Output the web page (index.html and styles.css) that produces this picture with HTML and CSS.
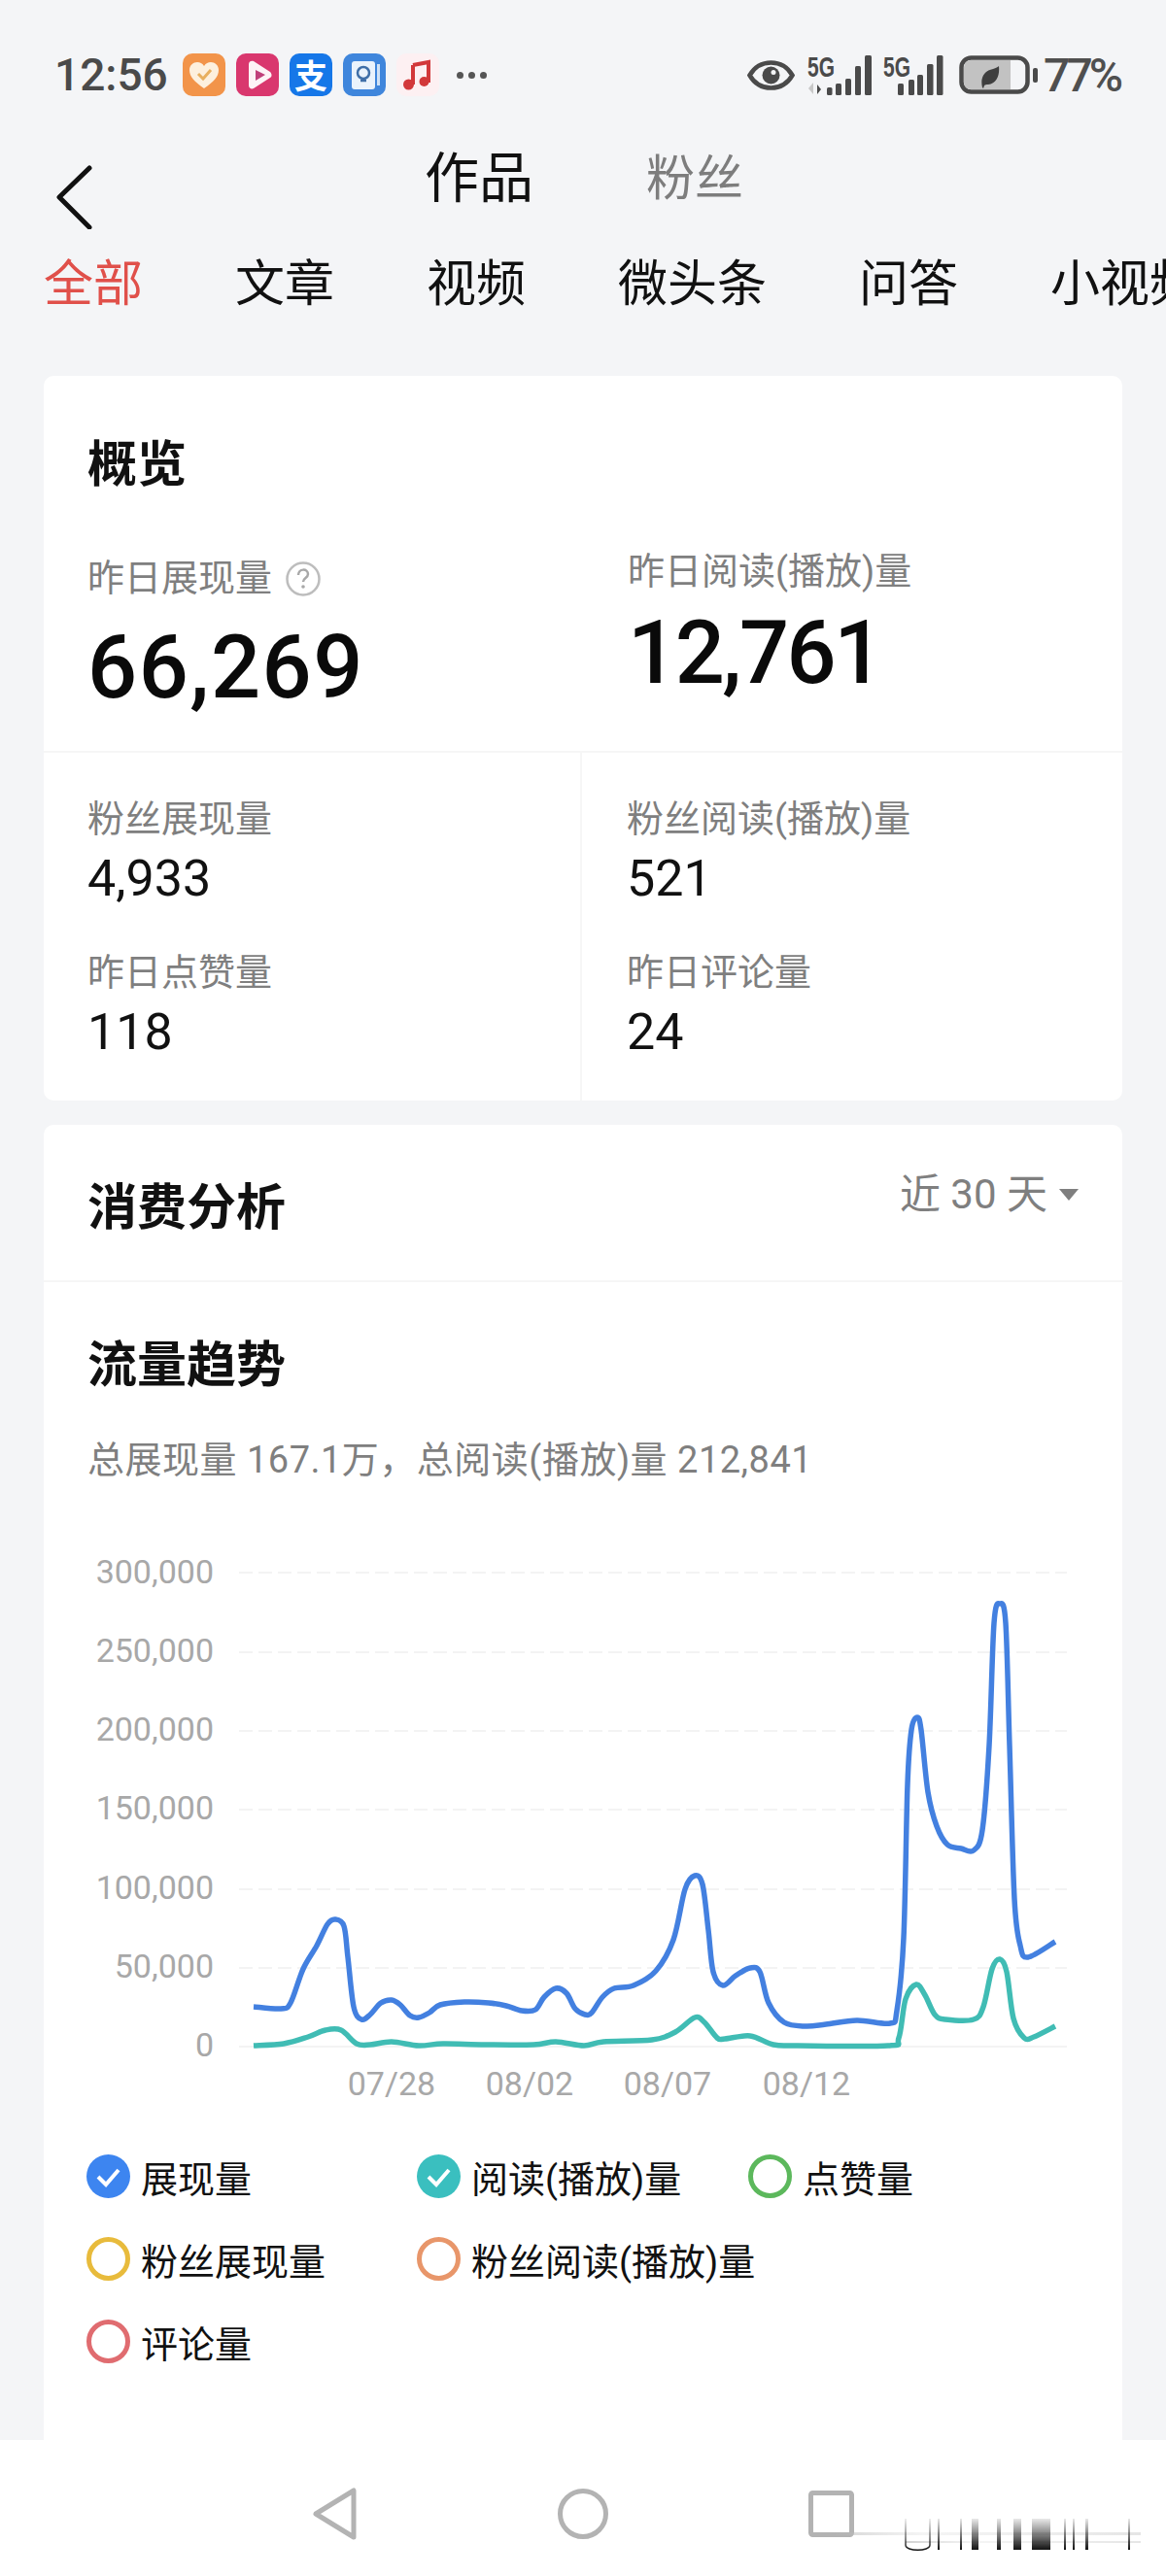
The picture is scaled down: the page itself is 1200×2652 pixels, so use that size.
FILE: index.html
```html
<!DOCTYPE html>
<html lang="zh-CN">
<head>
    <meta charset="UTF-8">
    <meta name="viewport" content="width=device-width, initial-scale=1.0">
    <title>作品</title>
    <link rel="stylesheet" href="styles.css">
</head>
<body>
    <div class="status">
        <span class="time">12:56</span>
        <div class="apps">
            <svg class="app" viewBox="0 0 44 44"><rect width="44" height="44" rx="10" fill="#f2944a"/><path d="M22 36C12 29 7 24 7 17c0-5 4-8 8-8 3 0 5 1 7 4 2-3 4-4 7-4 4 0 8 3 8 8 0 7-5 12-15 19z" fill="#fdf0de"/><path d="M16 21l5 5 8-9" fill="none" stroke="#e8b060" stroke-width="3"/></svg>
            <svg class="app" viewBox="0 0 44 44"><rect width="44" height="44" rx="10" fill="#d9376e"/><path d="M13 11c0-3 3-4 5-3l17 11c2 2 2 5 0 6L18 36c-2 1-5 0-5-3z" fill="#fdf3f6"/><path d="M20 17l10 5-10 6z" fill="#c0407a"/></svg>
            <svg class="app" viewBox="0 0 44 44"><rect width="44" height="44" rx="10" fill="#1677e8"/><text x="22" y="36" class="app-text">支</text></svg>
            <svg class="app" viewBox="0 0 44 44"><rect width="44" height="44" rx="10" fill="#3f86dc"/><rect x="9" y="8" width="24" height="29" rx="3" fill="#eaf3fc"/><rect x="35" y="11" width="3" height="22" fill="#cfe2f6"/><circle cx="21" cy="20" r="6" fill="none" stroke="#3f6fa8" stroke-width="2.500"/><path d="M18 28h6" stroke="#3f6fa8" stroke-width="2.500"/></svg>
            <svg class="app" viewBox="0 0 44 44"><rect width="44" height="44" rx="10" fill="#fdf0f2"/><path d="M17 12l16-3v21" fill="none" stroke="#d2383a" stroke-width="4"/><path d="M17 12v20" stroke="#d2383a" stroke-width="4"/><circle cx="12.500" cy="32" r="5.500" fill="#d2383a"/><circle cx="28.500" cy="29" r="5" fill="#d2383a"/></svg>
            <span class="dots"><i></i><i></i><i></i></span>
        </div>
        <div class="status-right">
            <svg class="eye" viewBox="0 0 49 31"><path d="M2.500 15.500C8 6 16 2.500 24.500 2.500S41 6 46.500 15.500C41 25 33 28.500 24.500 28.500S8 25 2.500 15.500z" fill="none" stroke="#4a4a4a" stroke-width="4.500"/><circle cx="24.500" cy="15.500" r="9" fill="#4a4a4a"/><circle cx="27" cy="12.500" r="2.500" fill="#f4f5f7"/></svg>
            <svg class="signal" viewBox="0 0 66 41"><text x="0" y="22" class="sig-text" textLength="28" lengthAdjust="spacingAndGlyphs">5G</text><path d="M6 28l-5 6 5 6z" fill="#c8c8c8"/><path d="M10 30l4 5-4 5z" fill="#4a4a4a"/><rect x="20" y="33" width="5.500" height="8" rx="1.500"/><rect x="29" y="29" width="6" height="12" rx="1.500"/><rect x="39" y="24" width="6" height="17" rx="1.500"/><rect x="49" y="11" width="6" height="30" rx="1.500"/><rect x="59" y="0" width="7" height="41" rx="1.500"/></svg>
            <svg class="signal signal-b" viewBox="0 0 62 41"><text x="0" y="22" class="sig-text" textLength="28" lengthAdjust="spacingAndGlyphs">5G</text><rect x="15" y="29" width="6" height="12" rx="1.500"/><rect x="26" y="25" width="6" height="16" rx="1.500"/><rect x="35" y="20" width="6" height="21" rx="1.500"/><rect x="45" y="9" width="6.500" height="32" rx="1.500"/><rect x="55" y="0" width="6.500" height="41" rx="1.500"/></svg>
            <svg class="battery" viewBox="0 0 81 40"><rect x="2.500" y="2.500" width="68" height="35" rx="10" fill="none" stroke="#4a4a4a" stroke-width="4.500"/><path d="M5 12a7 7 0 0 1 7-7h41v30H12a7 7 0 0 1-7-7z" fill="#c2c2c2"/><path d="M24 33c-2-8 0-17 11-19 3-1 5-2 6-3 1 9-2 18-11 19-2 0-3 0-4 1l-1 3z" fill="#3f3f3f"/><rect x="76" y="13" width="5" height="15" rx="2" fill="#4a4a4a"/></svg>
            <span class="percent">77%</span>
        </div>
    </div>

    <div class="header">
        <svg class="back" viewBox="0 0 40 68"><path d="M36 5L5 35l31 31" fill="none" stroke="#111" stroke-width="5" stroke-linecap="round" stroke-linejoin="round"/></svg>
        <span class="head-tab on">作品</span>
        <span class="head-tab">粉丝</span>
    </div>

    <div class="tabs">
        <span class="tab on">全部</span>
        <span class="tab">文章</span>
        <span class="tab">视频</span>
        <span class="tab">微头条</span>
        <span class="tab">问答</span>
        <span class="tab">小视频</span>
    </div>

    <div class="page">
        <div class="card">
            <div class="overview">
                <h2 class="title">概览</h2>
                <div class="main-stats">
                    <div class="main-left">
                        <div class="label">昨日展现量
                            <svg class="help" viewBox="0 0 36 36"><circle cx="18" cy="18" r="16.500" fill="none" stroke="#bdbdbd" stroke-width="2.500"/><path d="M13 14c0-7 10-7 10-1 0 4-5 4-5 8" fill="none" stroke="#a8a8a8" stroke-width="2.500"/><circle cx="18" cy="26" r="1.800" fill="#a8a8a8"/></svg>
                        </div>
                        <div class="big wide-num">66,269</div>
                    </div>
                    <div class="main-right">
                        <div class="label">昨日阅读(播放)量</div>
                        <div class="big tight-num">12,761</div>
                    </div>
                </div>
            </div>
            <div class="minor">
                <div class="minor-col">
                    <div class="label">粉丝展现量</div>
                    <div class="value">4,933</div>
                    <div class="label next">昨日点赞量</div>
                    <div class="value">118</div>
                </div>
                <div class="minor-col right">
                    <div class="label">粉丝阅读(播放)量</div>
                    <div class="value">521</div>
                    <div class="label next">昨日评论量</div>
                    <div class="value">24</div>
                </div>
            </div>
        </div>

        <div class="card second">
            <div class="card-head">
                <h2 class="title">消费分析</h2>
                <div class="range">近 30 天<span class="caret"></span></div>
            </div>
            <div class="trend">
                <h2 class="title">流量趋势</h2>
                <div class="summary">总展现量 167.1万，总阅读(播放)量 212,841</div>
            </div>
            <svg class="chart" viewBox="45 1590 1110 590">
                <g class="grid">
                    <line x1="246" y1="1619" x2="1098" y2="1619"/>
                    <line x1="246" y1="1701" x2="1098" y2="1701"/>
                    <line x1="246" y1="1782" x2="1098" y2="1782"/>
                    <line x1="246" y1="1863" x2="1098" y2="1863"/>
                    <line x1="246" y1="1945" x2="1098" y2="1945"/>
                    <line x1="246" y1="2026" x2="1098" y2="2026"/>
                    <line x1="246" y1="2107" x2="1098" y2="2107" class="base"/>
                </g>
                <g class="axis-y">
                    <text x="220" y="1630">300,000</text>
                    <text x="220" y="1711">250,000</text>
                    <text x="220" y="1792">200,000</text>
                    <text x="220" y="1873">150,000</text>
                    <text x="220" y="1955">100,000</text>
                    <text x="220" y="2036">50,000</text>
                    <text x="220" y="2117">0</text>
                </g>
                <g class="axis-x">
                    <text x="403" y="2157">07/28</text>
                    <text x="545" y="2157">08/02</text>
                    <text x="687" y="2157">08/07</text>
                    <text x="830" y="2157">08/12</text>
                </g>
                <path id="lineShow" class="line blue"/>
                <path id="lineRead" class="line teal"/>
            </svg>
            <div class="legend">
                <div class="item"><svg class="mark" viewBox="0 0 45 45"><circle cx="22.500" cy="22.500" r="22.500" fill="#3d85f0"/><path d="M12 23l8 8 13-15" fill="none" stroke="#fff" stroke-width="4"/></svg>展现量</div>
                <div class="item"><svg class="mark" viewBox="0 0 45 45"><circle cx="22.500" cy="22.500" r="22.500" fill="#3abfbf"/><path d="M12 23l8 8 13-15" fill="none" stroke="#fff" stroke-width="4"/></svg>阅读(播放)量</div>
                <div class="item"><span class="mark ring green"></span>点赞量</div>
                <div class="item"><span class="mark ring yellow"></span>粉丝展现量</div>
                <div class="item wide"><span class="mark ring orange"></span>粉丝阅读(播放)量</div>
                <div class="item"><span class="mark ring red"></span>评论量</div>
            </div>
        </div>
    </div>

    <div class="nav">
        <svg class="nav-back" viewBox="0 0 48 56"><path d="M44 4v48L5 28z" fill="none" stroke="#b3b3b3" stroke-width="5" stroke-linejoin="round"/></svg>
        <svg class="nav-home" viewBox="0 0 56 56"><circle cx="28" cy="28" r="23.500" fill="none" stroke="#b3b3b3" stroke-width="5"/></svg>
        <svg class="nav-recent" viewBox="0 0 47 48"><rect x="2.500" y="2.500" width="42" height="43" rx="2" fill="none" stroke="#b3b3b3" stroke-width="5"/></svg>
        <svg class="smudge" viewBox="0 0 318 36">
            <defs>
                <linearGradient id="fadeBar" x1="0" y1="0" x2="0" y2="1">
                    <stop offset="0" stop-color="#222" stop-opacity="0.100"/>
                    <stop offset="1" stop-color="#111"/>
                </linearGradient>
                <linearGradient id="fadeLine" x1="0" y1="0" x2="1" y2="0">
                    <stop offset="0" stop-color="#b3b3b3" stop-opacity="0.600"/>
                    <stop offset="0.300" stop-color="#ccc" stop-opacity="0.200"/>
                    <stop offset="1" stop-color="#aaa" stop-opacity="0.300"/>
                </linearGradient>
            </defs>
            <rect x="0" y="15" width="318" height="3" fill="url(#fadeLine)"/>
            <rect x="76" y="24" width="242" height="2" fill="url(#fadeLine)"/>
            <path d="M76 1v27c0 7 25 7 25 0V1" fill="none" stroke="url(#fadeBar)" stroke-width="1.500"/>
            <rect x="109" y="1" width="2" height="32" fill="url(#fadeBar)"/>
            <rect x="132" y="1" width="2" height="32" fill="url(#fadeBar)"/>
            <rect x="144" y="1" width="7" height="32" fill="url(#fadeBar)"/>
            <rect x="170" y="1" width="4" height="32" fill="url(#fadeBar)"/>
            <rect x="187" y="1" width="8" height="32" fill="url(#fadeBar)"/>
            <rect x="206" y="1" width="19" height="32" fill="url(#fadeBar)"/>
            <rect x="239" y="1" width="2" height="32" fill="url(#fadeBar)"/>
            <rect x="248" y="1" width="2" height="32" fill="url(#fadeBar)"/>
            <rect x="261" y="1" width="3" height="32" fill="url(#fadeBar)"/>
            <rect x="305" y="1" width="2" height="32" fill="url(#fadeBar)"/>
        </svg>
    </div>

    <script>
        // 展现量 and 阅读量 traced as page coordinates, joined with a smooth curve
        var show = [[261,2066],[289,2068],[299,2062],[312,2027],[326,2003],[337,1981],[345,1976],[354,1983],[358,2015],[364,2066],[372,2079],[381,2074],[392,2062],[403,2059],[412,2064],[422,2075],[431,2077],[442,2072],[453,2064],[478,2061],[503,2062],[521,2065],[537,2070],[551,2069],[560,2056],[572,2047],[583,2052],[592,2068],[602,2074],[609,2072],[620,2056],[632,2047],[652,2044],[675,2029],[693,1997],[705,1945],[715,1931],[723,1940],[729,1987],[734,2030],[744,2044],[757,2034],[772,2026],[782,2030],[791,2062],[807,2082],[829,2086],[850,2084],[882,2080],[916,2083],[923,2070],[930,1995],[934,1837],[938,1781],[944,1768],[948,1781],[955,1845],[964,1880],[975,1899],[989,1903],[1002,1905],[1011,1884],[1018,1797],[1023,1671],[1029,1651],[1035,1671],[1039,1797],[1044,1955],[1050,2003],[1058,2015],[1086,1999]];
        var read = [[261,2106],[292,2104],[317,2097],[335,2090],[351,2090],[367,2104],[381,2105],[403,2102],[431,2106],[456,2104],[499,2105],[549,2105],[572,2102],[601,2106],[621,2102],[671,2100],[695,2092],[715,2077],[725,2082],[738,2098],[746,2099],[772,2096],[796,2105],[821,2106],[914,2106],[925,2098],[932,2058],[943,2043],[952,2054],[962,2074],[973,2079],[1002,2079],[1012,2066],[1021,2027],[1029,2017],[1036,2030],[1043,2078],[1054,2098],[1064,2097],[1086,2086]];

        function smooth(pts) {
            var d = 'M' + pts[0][0] + ' ' + pts[0][1];
            for (var i = 0; i < pts.length - 1; i++) {
                var a = pts[i - 1] || pts[i];
                var b = pts[i];
                var c = pts[i + 1];
                var e = pts[i + 2] || c;
                d += 'C' + (b[0] + (c[0] - a[0]) / 6) + ' ' + (b[1] + (c[1] - a[1]) / 6) + ' ' +
                     (c[0] - (e[0] - b[0]) / 6) + ' ' + (c[1] - (e[1] - b[1]) / 6) + ' ' + c[0] + ' ' + c[1];
            }
            return d;
        }

        document.getElementById('lineShow').setAttribute('d', smooth(show));
        document.getElementById('lineRead').setAttribute('d', smooth(read));
    </script>
</body>
</html>
```

FILE: styles.css
```css
* {
    box-sizing: border-box;
}
body {
    margin: 0;
    width: 1200px;
    height: 2652px;
    overflow: hidden;
    display: flex;
    flex-direction: column;
    background-color: #f4f5f7;
    color: #111;
    font-family: Roboto, "Noto Sans CJK SC", sans-serif;
}

/* status bar */
.status {
    height: 154px;
    flex: none;
    display: flex;
    align-items: center;
    padding-left: 56px;
    color: #4a4a4a;
}
.time {
    font-size: 46px;
    font-weight: 500;
    width: 132px;
}
.apps {
    display: flex;
    align-items: center;
    gap: 11px;
}
.app {
    width: 44px;
    height: 44px;
    display: block;
}
.app-text {
    fill: #fff;
    font-size: 34px;
    font-weight: 700;
    text-anchor: middle;
}
.dots {
    display: flex;
    gap: 5px;
    margin-left: 7px;
}
.dots i {
    width: 7px;
    height: 7px;
    border-radius: 50%;
    background-color: #555;
}
.status-right {
    margin-left: auto;
    padding-right: 48px;
    display: flex;
    align-items: center;
}
.eye {
    width: 49px;
    height: 31px;
    margin-right: 13px;
}
.signal {
    width: 66px;
    height: 41px;
    fill: #4a4a4a;
    margin-right: 12px;
    overflow: visible;
}
.signal-b {
    width: 62px;
    margin-right: 16px;
}
.sig-text {
    font-family: "Liberation Sans", sans-serif;
    font-size: 30px;
    font-weight: 700;
}
.battery {
    width: 81px;
    height: 40px;
    margin-right: 6px;
}
.percent {
    font-size: 48px;
    font-weight: 500;
    letter-spacing: -4px;
    color: #4f4f4f;
}

/* header */
.header {
    height: 109px;
    flex: none;
    display: flex;
    align-items: flex-start;
    position: relative;
    padding-left: 437px;
    gap: 116px;
}
.back {
    position: absolute;
    left: 56px;
    top: 14px;
    width: 40px;
    height: 68px;
}
.head-tab {
    font-size: 50px;
    line-height: 60px;
    color: #7d7d7d;
}
.head-tab.on {
    font-size: 56px;
    color: #111;
}
.tabs {
    height: 60px;
    flex: none;
    display: flex;
    gap: 95px;
    padding-left: 45px;
    overflow: hidden;
    white-space: nowrap;
}
.tab {
    flex: none;
    font-size: 51px;
    line-height: 60px;
}
.tab.on {
    color: #e0504a;
}

/* cards */
.page {
    flex: 1;
    min-height: 0;
    overflow: hidden;
    padding: 64px 45px 0;
}
.card {
    background: white;
    border-radius: 10px;
}
.second {
    margin-top: 25px;
    height: 1500px;
}
.title {
    margin: 0;
    font-size: 51px;
    line-height: 60px;
    font-weight: 700;
    color: #111;
}
.overview {
    height: 388px;
    padding: 62px 0 0 45px;
    border-bottom: 2px solid #f6f6f6;
}
.main-stats {
    display: flex;
}
.main-left {
    width: 556px;
    padding-top: 61px;
}
.main-right {
    padding-top: 54px;
}
.label {
    font-size: 38px;
    line-height: 50px;
    color: #7f7f7f;
    white-space: nowrap;
}
.help {
    width: 36px;
    height: 36px;
    vertical-align: -6px;
    margin-left: 5px;
}
.big {
    font-size: 90px;
    line-height: 100px;
    font-weight: 500;
    color: #0a0a0a;
    margin-top: 18px;
}
.wide-num {
    letter-spacing: 1.500px;
}
.main-right .big {
    margin-top: 10px;
}
.tight-num {
    letter-spacing: -2.500px;
}
.minor {
    display: flex;
    height: 358px;
}
.minor-col {
    width: 554px;
    padding: 43px 0 0 45px;
    border-right: 2px solid #f6f6f6;
}
.minor-col.right {
    border-right: none;
    padding-left: 46px;
}
.value {
    font-size: 52px;
    line-height: 60px;
    margin-top: 7px;
    color: #111;
}
.next {
    margin-top: 41px;
}
.card-head {
    height: 162px;
    display: flex;
    justify-content: space-between;
    align-items: flex-start;
    padding: 56px 46px 0 45px;
    border-bottom: 2px solid #f6f6f6;
}
.range {
    font-size: 42px;
    line-height: 50px;
    margin-top: -9px;
    color: #7f7f7f;
    display: flex;
    align-items: center;
    gap: 12px;
    position: relative;
    left: 1px;
}
.caret {
    width: 0;
    height: 0;
    border-left: 10px solid transparent;
    border-right: 10px solid transparent;
    border-top: 12px solid #7f7f7f;
}
.trend {
    padding: 56px 45px 0;
}
.summary {
    font-size: 38px;
    line-height: 50px;
    margin-top: 42px;
    letter-spacing: 0.500px;
    color: #7f7f7f;
}

/* chart */
.chart {
    display: block;
    width: 1110px;
    height: 590px;
    margin-top: 62px;
}
.grid line {
    stroke: #f3f3f3;
    stroke-width: 2;
    stroke-dasharray: 14 6;
}
.grid .base {
    stroke-dasharray: none;
}
.axis-y text, .axis-x text {
    font-size: 34px;
    fill: #a8a8a8;
}
.axis-y text {
    text-anchor: end;
}
.axis-x text {
    text-anchor: middle;
}
.line {
    fill: none;
    stroke-width: 5.500;
    stroke-linejoin: round;
}
.blue {
    stroke: #4380e0;
}
.teal {
    stroke: #40bcb4;
}

/* legend */
.legend {
    display: grid;
    grid-template-columns: 340px 341px 1fr;
    grid-auto-rows: 85px;
    padding: 18px 0 0 44px;
}
.item {
    display: flex;
    align-items: center;
    gap: 11px;
    font-size: 38px;
    color: #111;
    white-space: nowrap;
}
.item.wide {
    grid-column: 2 / 4;
}
.mark {
    width: 45px;
    height: 45px;
    flex: none;
    display: block;
}
.ring {
    border-radius: 50%;
    border: 5px solid #999;
}
.green { border-color: #5cb85c; }
.yellow { border-color: #e8bb3c; }
.orange { border-color: #e8966a; }
.red { border-color: #e06c70; }

/* bottom nav */
.nav {
    height: 140px;
    flex: none;
    background: white;
    position: relative;
    display: flex;
    align-items: center;
    padding: 12px 0 0 320px;
    gap: 204px;
}
.nav-back {
    width: 48px;
    height: 56px;
}
.nav-home {
    width: 56px;
    height: 56px;
}
.nav-recent {
    width: 47px;
    height: 48px;
}
.smudge {
    position: absolute;
    left: 856px;
    top: 80px;
    width: 318px;
    height: 36px;
}
```
